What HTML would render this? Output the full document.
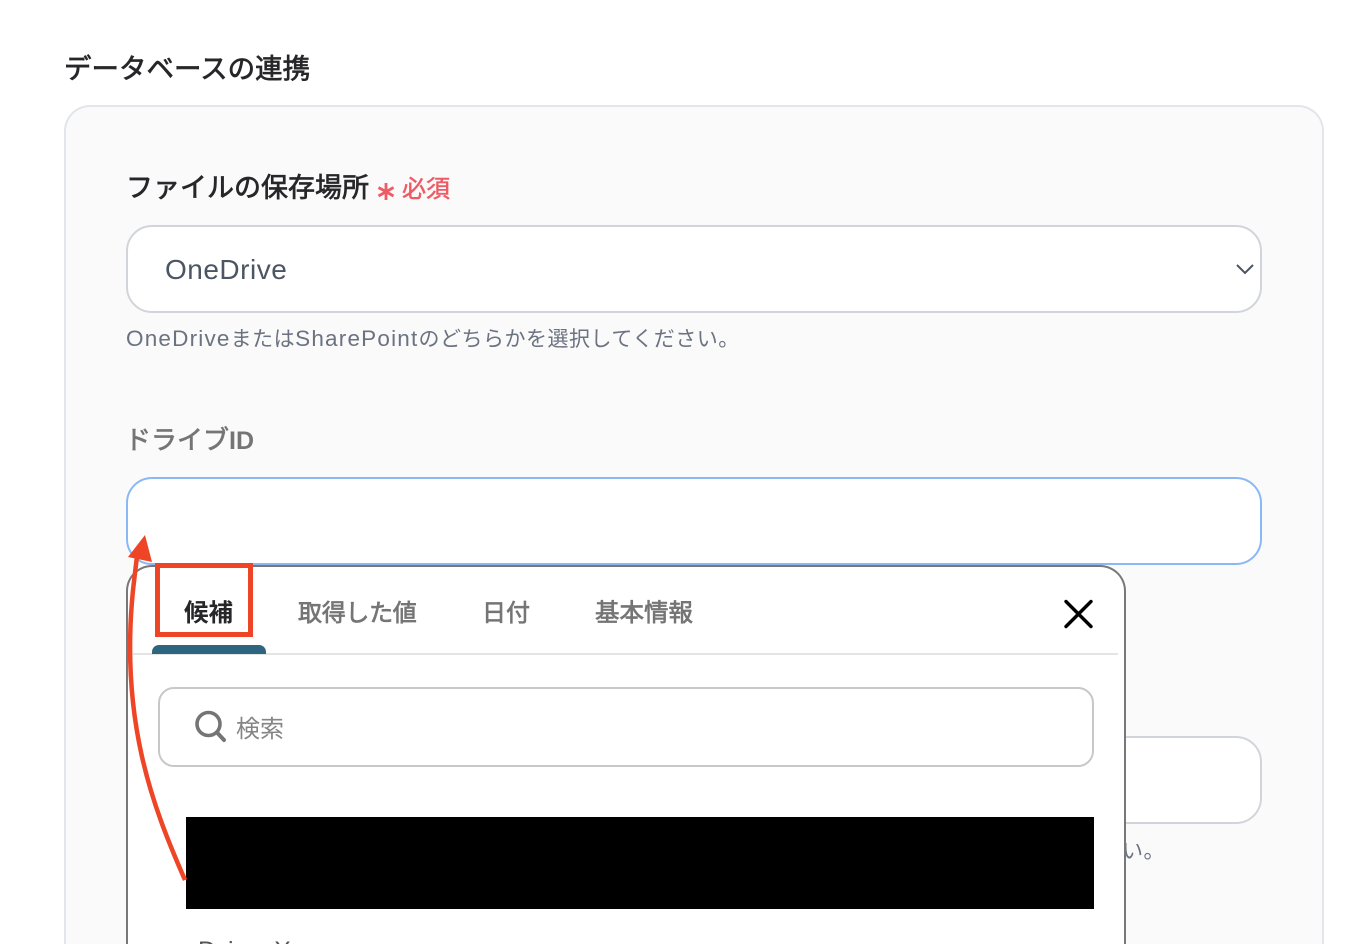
<!DOCTYPE html>
<html lang="ja"><head><meta charset="utf-8">
<style>
html,body{margin:0;padding:0;background:#fff;width:1348px;height:944px;overflow:hidden}
#r{width:1348px;height:944px;position:relative;overflow:hidden;font-family:"Liberation Sans","Noto Sans CJK JP",sans-serif}
.a{position:absolute;box-sizing:border-box}
.t{position:absolute;white-space:nowrap;line-height:1}
.m{-webkit-text-stroke:.7px currentColor}
.l{font-size:22.5px;letter-spacing:1.2px}
</style></head><body><div id="r">
<div class="t m" style="left:64px;top:54.500px;font-size:27.5px;color:#27272a">データベースの連携</div>
<div class="a" style="left:64px;top:105px;width:1260px;height:839px;background:#fafafa;border:2px solid #e2e5e9;border-bottom:0;border-radius:26px 26px 0 0"></div>
<div class="t m" style="left:126px;top:175px;font-size:27px;color:#27272a">ファイルの保存場所</div>
<svg class="a" style="left:376px;top:181px" width="20" height="22" viewBox="0 0 20 22"><path d="M10 2V19M2.500 6.500L17.500 15M17.500 6.500L2.500 15" fill="none" stroke="#ef5a64" stroke-width="2.800"/></svg>
<div class="t" style="left:402px;top:178px;font-size:24px;color:#ef5a64;-webkit-text-stroke:.5px #ef5a64">必須</div>
<div class="a" style="left:126px;top:225px;width:1136px;height:88px;background:#fff;border:2px solid #d1d5da;border-radius:26px"></div>
<div class="t" style="left:165px;top:256px;font-size:28px;color:#4b5563;letter-spacing:.5px">OneDrive</div>
<svg class="a" style="left:1236px;top:264px" width="18" height="11" viewBox="0 0 18 11"><path d="M1 1L9 9L17 1" fill="none" stroke="#4b5563" stroke-width="2"/></svg>
<div class="t" style="left:126px;top:328px;font-size:21px;letter-spacing:.5px;color:#6b7280"><span class="l">OneDrive</span>または<span class="l">SharePoint</span>のどちらかを選択してください。</div>
<div class="t m" style="left:125px;top:427px;font-size:26px;color:#757575">ドライブ<span style="font-size:25px;font-weight:700;-webkit-text-stroke:0">ID</span></div>
<div class="a" style="left:126px;top:477px;width:1136px;height:88px;background:#fff;border:2px solid #8ab8f5;border-radius:26px"></div>
<div class="a" style="left:126px;top:736px;width:1136px;height:88px;background:#fff;border:2px solid #d1d5da;border-radius:26px"></div>
<div class="t" style="left:1122px;top:841px;font-size:21px;letter-spacing:.5px;color:#6b7280">い。</div>
<div class="a" style="left:126px;top:565px;width:1000px;height:379px;background:#fff;border:2px solid #787878;border-bottom:0;border-radius:26px 26px 0 0"></div>
<div class="t" style="left:184px;top:602px;font-size:24.500px;font-weight:700;color:#27272a">候補</div>
<div class="t m" style="left:298px;top:602px;font-size:24px;letter-spacing:-.3px;color:#757575">取得した値</div>
<div class="t m" style="left:482px;top:602px;font-size:24px;color:#757575">日付</div>
<div class="t m" style="left:595px;top:602px;font-size:24.500px;color:#757575">基本情報</div>
<div class="a" style="left:133px;top:653px;width:985px;height:2px;background:#e4e4e4"></div>
<div class="a" style="left:152px;top:645px;width:114px;height:9px;background:#2e6680;border-radius:7px 7px 0 0"></div>
<svg class="a" style="left:1062px;top:598px" width="32" height="32" viewBox="0 0 32 32"><path d="M4 3.500L29 28.500M29 3.500L4 28.500" fill="none" stroke="#000" stroke-width="3.400" stroke-linecap="round"/></svg>
<div class="a" style="left:158px;top:687px;width:936px;height:80px;background:#fff;border:2px solid #c8c8c8;border-radius:16px"></div>
<svg class="a" style="left:192px;top:709px" width="36" height="36" viewBox="0 0 36 36"><circle cx="16.500" cy="15" r="11.500" fill="none" stroke="#757575" stroke-width="3.600"/><path d="M25 23.500L32 31" fill="none" stroke="#757575" stroke-width="4" stroke-linecap="round"/></svg>
<div class="t" style="left:236px;top:718px;font-size:24px;color:#858585">検索</div>
<div class="a" style="left:186px;top:817px;width:908px;height:92px;background:#000"></div>
<div class="t" style="left:198px;top:939px;height:5px;overflow:hidden;font-size:25px;letter-spacing:1.800px;color:#555">Drive X</div>
<div class="a" style="left:155px;top:563px;width:98px;height:74px;border:5px solid #ee4526"></div>
<svg class="a" style="left:0;top:0" width="1348" height="944" viewBox="0 0 1348 944"><path d="M185 880C152 805 120 720 133 590L137 556" fill="none" stroke="#ee4526" stroke-width="4.500"/><path d="M145 535L128 557L152 562Z" fill="#ee4526"/></svg>
</div></body></html>
